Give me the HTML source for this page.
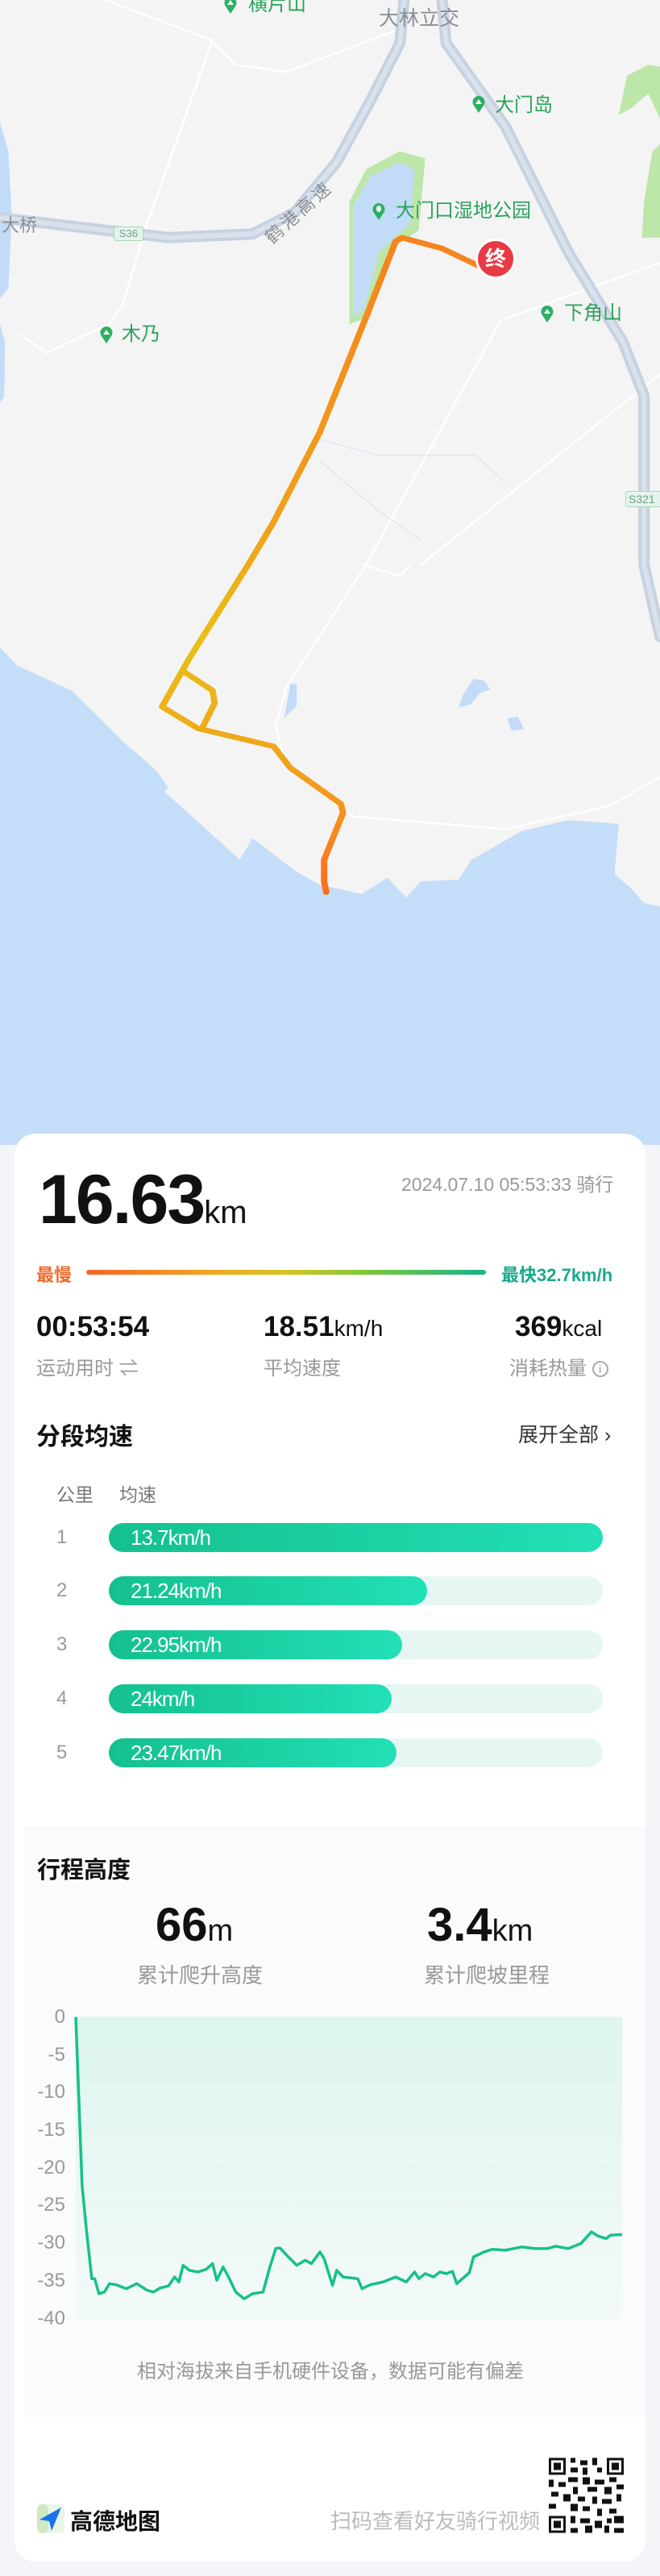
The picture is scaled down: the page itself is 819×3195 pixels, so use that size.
<!DOCTYPE html>
<html><head><meta charset="utf-8">
<style>
*{margin:0;padding:0;box-sizing:border-box}
body{width:819px;height:3195px;position:relative;overflow:hidden;background:#f3f5f8;font-family:"Liberation Sans","Noto Sans CJK SC",sans-serif;}
.a{position:absolute;white-space:nowrap}
.ml{position:absolute;white-space:nowrap;color:#2aa35c;font-size:24px;line-height:24px}
.pin{position:absolute;width:16px;height:22px}
.g{color:#999}
.bar{position:absolute;left:135px;width:613px;height:36px;border-radius:18px;background:#e6f6f3}
.fill{position:absolute;left:0;top:0;height:36px;border-radius:18px;background:linear-gradient(90deg,#14c08e,#22e0b6)}
.bt{position:absolute;left:27px;top:0;line-height:36px;color:#fff;font-size:26px;letter-spacing:-1px}
.rn{position:absolute;left:70px;color:#999;font-size:24px}
.yl{position:absolute;right:738px;color:#999;font-size:24px;line-height:24px}
</style></head><body>

<svg class="a" style="left:0;top:0" width="819" height="1420" viewBox="0 0 1568 3180" preserveAspectRatio="none">
<defs>
<linearGradient id="rg" x1="0" y1="640" x2="0" y2="2490" gradientUnits="userSpaceOnUse">
<stop offset="0" stop-color="#f5821e"/><stop offset="0.45" stop-color="#f0a21a"/><stop offset="0.62" stop-color="#e8c015"/><stop offset="0.85" stop-color="#f39a1c"/><stop offset="1" stop-color="#ff6a1e"/></linearGradient>
</defs>
<rect width="1568" height="3180" fill="#f4f4f4"/>
<path d="M0 340 L20 420 L28 600 L20 800 L0 830 Z" fill="#c2dcf7"/>
<path d="M0 900 L12 950 L10 1100 L0 1120 Z" fill="#c2dcf7"/>
<path d="M1490 210 L1540 180 L1568 185 L1568 330 L1540 260 L1500 300 L1470 320 Z" fill="#bde6a9"/>
<path d="M1568 400 L1550 420 L1530 560 L1525 660 L1568 660 Z" fill="#bde6a9"/>
<path d="M830 900 L830 560 L870 470 L950 420 L1010 440 L995 640 L920 700 L880 880 Z" fill="#bde6a9"/>
<path d="M840 880 L840 570 L880 490 L950 450 L985 470 L975 620 L900 700 L865 860 Z" fill="#c2dcf7"/>
<g fill="none" stroke="#ffffff" stroke-width="5" vector-effect="non-scaling-stroke" stroke-linecap="round">
<path d="M250 0 L500 110 L560 180 L680 200 L950 80"/>
<path d="M505 110 L350 620 L290 850 L260 900 L110 980 L50 930"/>
<path d="M1568 730 L1190 890 L870 1568 L680 1908 L655 2018 L680 2128 L840 2268 L1000 2283 L1200 2303 L1450 2238 L1568 2158"/>
<path d="M1568 1040 L1000 1568"/>
<path d="M860 1568 L950 1600 L975 1568"/>
</g>
<g fill="none" stroke="#d4def0" stroke-width="2" vector-effect="non-scaling-stroke">
<path d="M760 1220 L900 1265 L1130 1265 L1200 1340"/>
<path d="M760 1280 L900 1420 L1000 1500"/>
</g>
<g fill="none" stroke-linecap="round" stroke-linejoin="round">
<path d="M960 0 L950 120 L880 280 L800 450 L700 590 L600 650 L400 660 L0 605" stroke="#c7d2e0" stroke-width="14" vector-effect="non-scaling-stroke"/>
<path d="M1050 0 L1060 120 L1200 350 L1350 700 L1480 950 L1530 1100 L1530 1568 L1568 1768" stroke="#c7d2e0" stroke-width="14" vector-effect="non-scaling-stroke"/>
<path d="M960 0 L950 120 L880 280 L800 450 L700 590 L600 650 L400 660 L0 605" stroke="#d9e1ec" stroke-width="6" vector-effect="non-scaling-stroke"/>
<path d="M1050 0 L1060 120 L1200 350 L1350 700 L1480 950 L1530 1100 L1530 1568 L1568 1768" stroke="#d9e1ec" stroke-width="6" vector-effect="non-scaling-stroke"/>
</g>
<path d="M1125 1885 L1150 1890 L1165 1915 L1140 1925 L1120 1955 L1090 1965 L1100 1930 Z" fill="#c2dcf7"/>
<path d="M1205 1995 L1230 1990 L1245 2025 L1215 2030 Z" fill="#c2dcf7"/>
<path d="M690 1900 L705 1900 L705 1960 L675 1995 Z" fill="#c2dcf7"/>
<path d="M0 1798 L40 1848 L170 1918 L300 2068 L370 2138 L400 2188 L390 2198 L570 2388 L600 2328 L700 2418 L760 2458 L860 2483 L920 2438 L965 2493 L1000 2448 L1090 2443 L1120 2388 L1240 2308 L1350 2278 L1470 2288 L1460 2428 L1500 2468 L1530 2508 L1568 2518 L1568 3180 L0 3180 Z" fill="#c4ddf8"/>
<g fill="none" stroke="url(#rg)" stroke-width="15" vector-effect="non-scaling-stroke" stroke-linecap="round" stroke-linejoin="round">
<path d="M1140 740 L1050 690 L955 660 L940 670 L870 880 L760 1200 L650 1450 L590 1568 L450 1828 L385 1963 L470 2023 L650 2073 L690 2133 L810 2233 L815 2258 L770 2388 L770 2448 L775 2478"/>
<path d="M440 1868 L505 1918 L510 1953 L480 2023"/>
</g>
</svg>

<div class="ml" style="left:308px;top:-6px">横片山</div>
<div class="a" style="left:470px;top:3px;font-size:25px;color:#8a8f96">大林立交</div>
<div class="ml" style="left:614px;top:119px">大门岛</div>
<div class="ml" style="left:491px;top:250px">大门口湿地公园</div>
<div class="ml" style="left:700px;top:377px">下角山</div>
<div class="ml" style="left:151px;top:403px">木乃</div>
<div class="a" style="left:2px;top:262px;font-size:22px;color:#8a8f96">大桥</div>
<div class="a" style="left:318px;top:246px;font-size:22px;color:#8a8f96;transform:rotate(-42deg);letter-spacing:4px">鹤港高速</div>
<div class="a" style="left:141px;top:281px;width:37px;height:18px;border:1px solid #a8d8bd;background:#e6f3ec;border-radius:3px;font-size:13px;line-height:16px;color:#6aa78a;text-align:center">S36</div>
<div class="a" style="left:776px;top:609px;width:46px;height:20px;border:1px solid #a8d8bd;background:#e6f3ec;border-radius:3px;font-size:14px;line-height:18px;color:#6aa78a;padding-left:3px">S321</div>
<svg class="pin" style="left:278px;top:-5px" viewBox="0 0 16 22"><path d="M8 22 L2 13 A7.5 7.5 0 1 1 14 13 Z" fill="#2bb062"/><path d="M4 11 L8 5 L12 11 Z" fill="#fff"/></svg>
<svg class="pin" style="left:586px;top:118px" viewBox="0 0 16 22"><path d="M8 22 L2 13 A7.5 7.5 0 1 1 14 13 Z" fill="#2bb062"/><path d="M4 11 L8 5 L12 11 Z" fill="#fff"/></svg>
<svg class="pin" style="left:462px;top:251px" viewBox="0 0 16 22"><path d="M8 22 L2 13 A7.5 7.5 0 1 1 14 13 Z" fill="#2bb062"/><ellipse cx="8" cy="8" rx="3" ry="4" fill="#fff"/></svg>
<svg class="pin" style="left:671px;top:378px" viewBox="0 0 16 22"><path d="M8 22 L2 13 A7.5 7.5 0 1 1 14 13 Z" fill="#2bb062"/><path d="M4 11 L8 5 L12 11 Z" fill="#fff"/></svg>
<svg class="pin" style="left:124px;top:404px" viewBox="0 0 16 22"><path d="M8 22 L2 13 A7.5 7.5 0 1 1 14 13 Z" fill="#2bb062"/><path d="M4 11 L8 5 L12 11 Z" fill="#fff"/></svg>
<div class="a" style="left:590px;top:296px;width:50px;height:50px;border-radius:50%;background:#e83a45;border:3px solid #fff;color:#fff;font-size:26px;font-weight:bold;text-align:center;line-height:44px">终</div>

<div class="a" style="left:18px;top:1406px;width:783px;height:1771px;background:#fff;border-radius:26px"></div>
<div class="a" style="left:31px;top:2267px;width:770px;height:731px;background:#fafbfc;border-top:1px solid #f0f1f3"></div>

<div class="a" style="left:48px;top:1440px;font-size:86px;font-weight:bold;color:#111;letter-spacing:-2px;line-height:96px">16.63<span style="font-size:40px;font-weight:normal;letter-spacing:0">km</span></div>
<div class="a" style="left:498px;top:1450px;font-size:23px;color:#999">2024.07.10 05:53:33 骑行</div>
<div class="a" style="left:45px;top:1564px;font-size:22px;color:#f0692a;font-weight:bold">最慢</div>
<div class="a" style="left:107px;top:1575px;width:496px;height:6px;border-radius:3px;background:linear-gradient(90deg,#f2652a,#f3a320 30%,#d6c51f 50%,#7bc83a 70%,#1ab28a)"></div>
<div class="a" style="left:622px;top:1564px;font-size:22px;color:#19a98a;font-weight:bold">最快32.7km/h</div>

<div class="a" style="left:45px;top:1626px;font-size:35px;font-weight:bold;color:#111">00:53:54</div>
<div class="a" style="left:327px;top:1626px;font-size:35px;font-weight:bold;color:#111">18.51<span style="font-size:28px;font-weight:normal">km/h</span></div>
<div class="a" style="left:639px;top:1626px;font-size:35px;font-weight:bold;color:#111">369<span style="font-size:28px;font-weight:normal">kcal</span></div>
<div class="a g" style="left:45px;top:1677px;font-size:24px">运动用时 ⇌</div>
<div class="a g" style="left:327px;top:1677px;font-size:24px">平均速度</div>
<div class="a g" style="left:632px;top:1677px;font-size:24px">消耗热量 <span style="display:inline-block;width:20px;height:20px;border:2px solid #aaa;border-radius:50%;font-size:14px;line-height:16px;text-align:center;vertical-align:2px">i</span></div>

<div class="a" style="left:45px;top:1757px;font-size:30px;font-weight:bold;color:#111">分段均速</div>
<div class="a" style="left:643px;top:1760px;font-size:25px;color:#333">展开全部 ›</div>
<div class="a g" style="left:70px;top:1835px;font-size:23px;color:#777">公里</div>
<div class="a g" style="left:148px;top:1835px;font-size:23px;color:#777">均速</div>

<div class="rn" style="top:1893px">1</div>
<div class="bar" style="top:1889px"><div class="fill" style="width:613px"></div><div class="bt">13.7km/h</div></div>
<div class="rn" style="top:1959px">2</div>
<div class="bar" style="top:1955px"><div class="fill" style="width:395px"></div><div class="bt">21.24km/h</div></div>
<div class="rn" style="top:2026px">3</div>
<div class="bar" style="top:2022px"><div class="fill" style="width:364px"></div><div class="bt">22.95km/h</div></div>
<div class="rn" style="top:2093px">4</div>
<div class="bar" style="top:2089px"><div class="fill" style="width:351px"></div><div class="bt">24km/h</div></div>
<div class="rn" style="top:2160px">5</div>
<div class="bar" style="top:2156px"><div class="fill" style="width:357px"></div><div class="bt">23.47km/h</div></div>

<div class="a" style="left:46px;top:2296px;font-size:29px;font-weight:bold;color:#111">行程高度</div>
<div class="a" style="left:193px;top:2356px;font-size:58px;font-weight:bold;color:#111;line-height:64px">66<span style="font-size:38px;font-weight:normal">m</span></div>
<div class="a g" style="left:170px;top:2430px;font-size:26px">累计爬升高度</div>
<div class="a" style="left:530px;top:2356px;font-size:58px;font-weight:bold;color:#111;line-height:64px">3.4<span style="font-size:38px;font-weight:normal">km</span></div>
<div class="a g" style="left:526px;top:2430px;font-size:26px">累计爬坡里程</div>

<div class="yl" style="top:2490px">0</div>
<div class="yl" style="top:2537px">-5</div>
<div class="yl" style="top:2583px">-10</div>
<div class="yl" style="top:2630px">-15</div>
<div class="yl" style="top:2677px">-20</div>
<div class="yl" style="top:2723px">-25</div>
<div class="yl" style="top:2770px">-30</div>
<div class="yl" style="top:2817px">-35</div>
<div class="yl" style="top:2864px">-40</div>

<svg class="a" style="left:0;top:2250px" width="819" height="650" viewBox="0 0 1568 1568" preserveAspectRatio="none">
<defs><linearGradient id="cf" x1="0" y1="0" x2="0" y2="1"><stop offset="0" stop-color="#def5ef"/><stop offset="1" stop-color="#f3faf8"/></linearGradient></defs>
<rect x="180" y="607" width="1298" height="903" fill="url(#cf)"/>
<g stroke="#e4e8ea" stroke-width="1" stroke-dasharray="4 4" vector-effect="non-scaling-stroke">
<line x1="160" x2="1478" y1="720" y2="720"/><line x1="160" x2="1478" y1="832" y2="832"/><line x1="160" x2="1478" y1="945" y2="945"/><line x1="160" x2="1478" y1="1057" y2="1057"/><line x1="160" x2="1478" y1="1170" y2="1170"/><line x1="160" x2="1478" y1="1282" y2="1282"/><line x1="160" x2="1478" y1="1395" y2="1395"/><line x1="160" x2="1478" y1="1507" y2="1507"/>
</g>
<polyline fill="none" stroke="#17c08a" stroke-width="3.5" vector-effect="non-scaling-stroke" stroke-linejoin="round" points="180,607 195,1110 205,1240 218,1390 225,1390 235,1435 248,1430 260,1405 275,1408 300,1420 325,1405 350,1425 365,1430 380,1418 400,1412 415,1385 425,1400 435,1350 450,1365 470,1370 490,1362 505,1345 515,1395 530,1355 545,1390 560,1430 580,1450 600,1435 625,1430 640,1360 655,1300 665,1298 685,1325 705,1350 725,1335 740,1345 760,1310 770,1330 790,1410 800,1365 815,1385 850,1390 860,1420 880,1408 910,1400 940,1385 965,1400 985,1370 995,1390 1010,1375 1030,1385 1045,1370 1060,1375 1075,1368 1085,1405 1115,1372 1125,1325 1150,1310 1170,1302 1200,1305 1240,1295 1270,1300 1300,1300 1320,1293 1350,1300 1380,1285 1405,1250 1420,1262 1440,1270 1450,1260 1478,1258"/>
</svg>

<div class="a g" style="left:170px;top:2921px;font-size:24px">相对海拔来自手机硬件设备，数据可能有偏差</div>

<svg class="a" style="left:46px;top:3106px" width="34" height="36" viewBox="0 0 34 36"><rect x="0" y="0" width="34" height="36" rx="6" fill="#e9f5e6"/><rect x="0" y="0" width="14" height="36" rx="6" fill="#cfeac0"/><path d="M30 4 L3 19 L15 21 L18 33 Z" fill="#1a73e8"/></svg>
<div class="a" style="left:87px;top:3106px;font-size:28px;font-weight:bold;color:#111">高德地图</div>
<div class="a" style="left:410px;top:3107px;font-size:26px;color:#bbb">扫码查看好友骑行视频</div>
<svg class="a" style="left:681px;top:3048px" width="93" height="94" viewBox="0 0 31 31" shape-rendering="crispEdges">
<rect width="31" height="31" fill="#fff"/>
<g fill="#111"><path d="M0 0h7v7h-7zM24 0h7v7h-7zM0 24h7v7h-7z"/></g>
<g fill="#fff"><path d="M1 1h5v5h-5zM25 1h5v5h-5zM1 25h5v5h-5z"/></g>
<g fill="#111"><path d="M2 2h3v3h-3zM26 2h3v3h-3zM2 26h3v3h-3z"/>
<path d="M9 0h2v2h-2zM13 1h3v2h-3zM18 0h2v3h-2zM9 4h3v2h-3zM14 4h2v3h-2zM20 4h2v2h-2zM8 8h4v2h-4zM14 8h3v3h-3zM19 9h4v2h-4zM25 8h3v2h-3zM0 9h2v3h-2zM4 10h3v2h-3zM10 12h2v3h-2zM16 12h4v2h-4zM23 12h3v3h-3zM28 11h3v2h-3zM1 14h3v2h-3zM6 15h3v3h-3zM12 16h3v2h-3zM18 16h2v3h-2zM22 17h4v2h-4zM28 15h2v3h-2zM0 19h3v2h-3zM9 19h3v3h-3zM14 20h3v2h-3zM20 21h2v3h-2zM25 21h3v2h-3zM9 24h2v3h-2zM13 25h4v2h-4zM19 26h3v3h-3zM24 25h2v2h-2zM27 24h4v3h-4zM9 29h3v2h-3zM15 28h3v3h-3zM23 28h2v3h-2zM27 29h4v2h-4z"/></g>
</svg>
</body></html>
